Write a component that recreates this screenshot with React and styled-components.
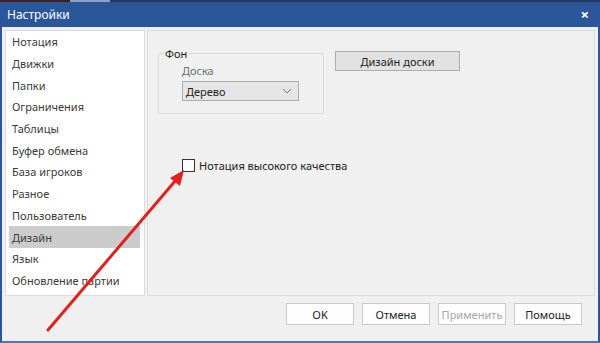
import { useState } from "react";
import { styled, createGlobalStyle } from "styled-components";

const GlobalStyle = createGlobalStyle`
  html, body {
    margin: 0;
    padding: 0;
    background: #1d2a44;
  }
  body {
    font-family: "Noto Sans", "Open Sans", "DejaVu Sans", sans-serif;
  }
`;

const Screen = styled.div`
  position: relative;
  width: 600px;
  height: 343px;
  display: flex;
  flex-direction: column;
  overflow: hidden;
`;

const TopStrip = styled.div`
  height: 2px;
  background: linear-gradient(90deg, #3a1f2a 0 70px, #8fa3c0 70px 110px, #26395e 110px);
`;

const TitleBar = styled.div`
  height: 25px;
  background: #2b579a;
  display: flex;
  align-items: center;
  justify-content: space-between;
  padding: 0 11px 0 7px;
  color: #fff;
  font-size: 12px;
`;

const CloseButton = styled.span`
  font-size: 15px;
  font-weight: 700;
  line-height: 1;
`;

const Body = styled.div`
  flex: 1;
  background: #f0f0f0;
  border-left: 2px solid #2b579a;
  border-right: 2px solid #2b579a;
  border-bottom: 2px solid #4a78b8;
  padding: 3px 3px 0 3px;
  display: flex;
  flex-direction: column;
`;

const Content = styled.div`
  height: 266px;
  display: flex;
  gap: 2px;
`;

const NavList = styled.ul`
  width: 140px;
  box-sizing: border-box;
  margin: 0;
  padding: 0 4px 0 3px;
  list-style: none;
  background: #fff;
  border: 1px solid #dcdcdc;
`;

const NavItem = styled.li`
  height: 21.7px;
  display: flex;
  align-items: center;
  padding-left: 3px;
  font-size: 11px;
  color: #3a3a3a;
  background: ${(p) => (p.$active ? "#cccccc" : "transparent")};
`;

const Panel = styled.div`
  flex: 1;
  background: #f0f0f0;
  border: 1px solid #dcdcdc;
  padding: 15px 0 0 10px;
  display: flex;
  flex-direction: column;
`;

const TopRow = styled.div`
  display: flex;
  align-items: flex-start;
  gap: 11px;
`;

const Group = styled.fieldset`
  width: 141px;
  height: 64px;
  margin: 0;
  padding: 2px 0 0 23px;
  border: 1px solid #dcdcdc;
  border-radius: 2px;
`;

const Legend = styled.legend`
  padding: 0 2px;
  margin-left: -19px;
  font-size: 11px;
  color: #222;
`;

const FieldLabel = styled.div`
  font-size: 11px;
  color: #6d6d6d;
  margin-bottom: 3px;
`;

const Select = styled.div`
  width: 117px;
  height: 20px;
  box-sizing: border-box;
  border: 1px solid #adadad;
  background: #e5e5e5;
  display: flex;
  align-items: center;
  justify-content: space-between;
  padding: 0 6px 0 3px;
  font-size: 11px;
  color: #222;
`;

const Button = styled.button`
  width: ${(p) => p.$w || 68}px;
  height: ${(p) => p.$h || 22}px;
  box-sizing: border-box;
  border: 1px solid ${(p) => (p.$flat ? "#c9c9c9" : "#adadad")};
  background: ${(p) => (p.$flat ? "#fdfdfd" : "#e1e1e1")};
  color: ${(p) => (p.disabled ? "#a8a8a8" : "#222")};
  font-family: inherit;
  font-size: 11px;
  padding: 0;
  cursor: default;
`;

const CheckRow = styled.label`
  display: flex;
  align-items: center;
  gap: 4px;
  margin: 44px 0 0 24px;
  font-size: 11px;
  color: #222;
`;

const CheckBox = styled.span`
  width: 11px;
  height: 11px;
  border: 1px solid #333;
  background: #fff;
  display: inline-block;
`;

const Footer = styled.div`
  flex: 1;
  display: flex;
  justify-content: flex-end;
  align-items: flex-start;
  gap: 8px;
  padding: 7px 13px 0 0;
`;

const Overlay = styled.svg`
  position: absolute;
  left: 0;
  top: 0;
  pointer-events: none;
`;

const sections = [
  "Нотация",
  "Движки",
  "Папки",
  "Ограничения",
  "Таблицы",
  "Буфер обмена",
  "База игроков",
  "Разное",
  "Пользователь",
  "Дизайн",
  "Язык",
  "Обновление партии",
];

const App = () => {
  const [active] = useState("Дизайн");
  return (
    <>
      <GlobalStyle />
      <Screen>
        <TopStrip />
        <TitleBar>
          <span>Настройки</span>
          <CloseButton>×</CloseButton>
        </TitleBar>
        <Body>
          <Content>
            <NavList>
              {sections.map((s) => (
                <NavItem key={s} $active={s === active}>
                  {s}
                </NavItem>
              ))}
            </NavList>
            <Panel>
              <TopRow>
                <Group>
                  <Legend>Фон</Legend>
                  <FieldLabel>Доска</FieldLabel>
                  <Select>
                    <span>Дерево</span>
                    <svg width="10" height="6" viewBox="0 0 10 6">
                      <path d="M1 1 L5 5 L9 1" fill="none" stroke="#777" strokeWidth="1" />
                    </svg>
                  </Select>
                </Group>
                <Button $w={125} $h={20} style={{ marginTop: 5 }}>
                  Дизайн доски
                </Button>
              </TopRow>
              <CheckRow>
                <CheckBox />
                Нотация высокого качества
              </CheckRow>
            </Panel>
          </Content>
          <Footer>
            <Button $flat>OK</Button>
            <Button $flat>Отмена</Button>
            <Button $flat disabled>
              Применить
            </Button>
            <Button $flat>Помощь</Button>
          </Footer>
        </Body>
        <Overlay width="600" height="343" viewBox="0 0 600 343">
          <line x1="48" y1="330" x2="176" y2="180" stroke="#e3201b" strokeWidth="3" strokeLinecap="round" />
          <polygon points="184,170 170,178 180,186" fill="#e3201b" />
        </Overlay>
      </Screen>
    </>
  );
};

export default App;
